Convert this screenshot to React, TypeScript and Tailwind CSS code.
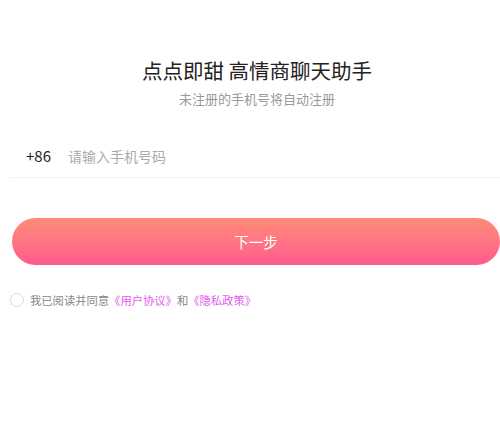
export default function App() {
  return (
    <div className="w-[500px] h-[431px] bg-white overflow-hidden font-['Noto_Sans_CJK_SC',sans-serif]">
      {/* Header */}
      <div className="pt-[56px] flex flex-col items-center pl-[14px]">
        <div className="text-[20.5px] leading-[28px] text-[#222]">点点即甜 高情商聊天助手</div>
        <div className="mt-[6px] text-[13px] leading-[18px] text-[#999]">未注册的手机号将自动注册</div>
      </div>

      {/* Phone input */}
      <div className="mt-[27px] ml-[10px] flex items-center h-[43px] border-b border-[#f2f2f2]">
        <span className="pl-[16px] w-[58px] text-[15px] text-[#222]">+86</span>
        <span className="text-[14px] text-[#aaa]">请输入手机号码</span>
      </div>

      {/* Next button */}
      <div className="mt-[40px] ml-[12px]">
        <button className="w-full h-[47px] rounded-full bg-gradient-to-b from-[#ff8c78] to-[#ff5a8e] text-white text-[14.5px]">
          下一步
        </button>
      </div>

      {/* Agreement */}
      <div className="mt-[27px] ml-[10px] flex items-center gap-[6px]">
        <span className="w-[14px] h-[14px] rounded-full border border-[#ddd]" />
        <span className="text-[11.3px] text-[#888]">
          我已阅读并同意<span className="text-[#e25cf0]">《用户协议》</span>和<span className="text-[#e25cf0]">《隐私政策》</span>
        </span>
      </div>
    </div>
  );
}
